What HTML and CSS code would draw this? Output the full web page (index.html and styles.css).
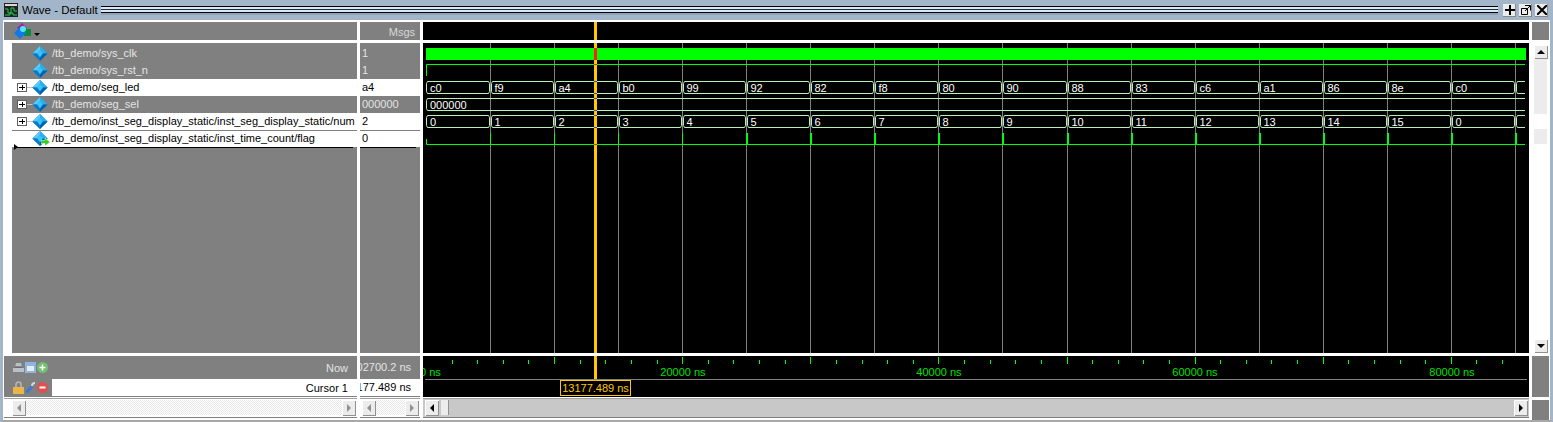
FILE: index.html

```html
<!DOCTYPE html>
<html lang="en">
<head>
  <meta charset="UTF-8">
  <meta name="viewport" content="width=device-width, initial-scale=1.0">
  <title>Wave - Default</title>
  <link rel="stylesheet" href="styles.css">
</head>
<body>
  <svg class="defs" width="0" height="0">
    <symbol id="diamond" viewBox="0 0 18 18">
      <polygon points="9,1 17,9 9,17 1,9" fill="#0a8fe0"/>
      <polygon points="9,1 1,9 6,9 9,5" fill="#5fc8f5"/>
      <polygon points="9,1 17,9 12,9 9,5" fill="#2ab0f0"/>
      <polygon points="1,9 9,17 9,13 6,9" fill="#0b78c8"/>
      <polygon points="17,9 9,17 9,13 12,9" fill="#0560a8"/>
      <polygon points="9,5 12,9 9,13 6,9" fill="#35c8fa"/>
    </symbol>
  </svg>

  <div class="window">
    <div class="titlebar">
      <svg class="title-icon" width="14" height="14" viewBox="0 0 14 14">
        <rect width="14" height="14" fill="#222"/>
        <rect x="1" y="1" width="12" height="2" fill="#d8d8d8"/>
        <path d="M1 6h3v4h3V5h3v3h3M1 12h5v-2h3v2h4" fill="none" stroke="#1fd050"/>
      </svg>
      <span class="title-text">Wave - Default</span>
      <div class="grip"></div>
      <div class="title-btns">
        <button class="title-btn">
          <svg width="10" height="10" viewBox="0 0 10 10"><path d="M5 0v10M0 5h10" stroke="#000" stroke-width="2"/></svg>
        </button>
        <button class="title-btn">
          <svg width="10" height="10" viewBox="0 0 10 10"><path d="M.5 3.5h6v6h-6zM4 .5h5.500v5M9 1 4 6" fill="none" stroke="#000"/></svg>
        </button>
        <button class="title-btn">
          <svg width="10" height="10" viewBox="0 0 10 10"><path d="M0 0l10 10M10 0 0 10" stroke="#000" stroke-width="2"/></svg>
        </button>
      </div>
    </div>

    <div class="panes">
      <!-- header row -->
      <div class="head head-names">
        <svg width="17" height="17" viewBox="0 0 17 17">
          <polygon points="3,5 8,0 13,5 8,10" fill="#a020c0"/>
          <rect x="10" y="6" width="7" height="7" fill="#0d8a3a"/>
          <polygon points="0,10 6,4 12,10 6,16" fill="#1078e8"/>
          <circle cx="9" cy="6" r="3" fill="#50e8f0"/>
        </svg>
        <span class="drop"></span>
      </div>
      <div class="head head-msgs">Msgs</div>
      <div class="head-wave"><span class="cursor-stub"></span></div>
      <div class="head head-side"></div>

      <!-- signal rows -->
      <div class="names">
        <div class="row">
          <svg class="sig"><use href="#diamond"/></svg>
          <span>/tb_demo/sys_clk</span>
        </div>
        <div class="row">
          <svg class="sig"><use href="#diamond"/></svg>
          <span>/tb_demo/sys_rst_n</span>
        </div>
        <div class="row sel">
          <i class="plus"></i>
          <svg class="sig"><use href="#diamond"/></svg>
          <span>/tb_demo/seg_led</span>
        </div>
        <div class="row">
          <i class="plus"></i>
          <svg class="sig"><use href="#diamond"/></svg>
          <span>/tb_demo/seg_sel</span>
        </div>
        <div class="row sel">
          <i class="plus"></i>
          <svg class="sig"><use href="#diamond"/></svg>
          <span>/tb_demo/inst_seg_display_static/inst_seg_display_static/num</span>
        </div>
        <div class="row sel last">
          <svg class="sig"><use href="#diamond"/></svg>
          <svg class="out" width="9" height="8" viewBox="0 0 9 8"><path d="M0 2.500h4V0l5 4-5 4V5.500H0z" fill="#30d020" stroke="#fff" stroke-width=".5"/></svg>
          <span>/tb_demo/inst_seg_display_static/inst_time_count/flag</span>
        </div>
        <span class="insert-mark"></span>
      </div>

      <div class="values">
        <div class="row">1</div>
        <div class="row">1</div>
        <div class="row sel">a4</div>
        <div class="row">000000</div>
        <div class="row sel">2</div>
        <div class="row sel last">0</div>
      </div>

      <div class="wave">
        <svg id="waveSvg" width="1106" height="310" viewBox="423 43 1106 310"></svg>
      </div>

      <div class="vscroll">
        <button class="sb-btn up"></button>
        <div class="vtrack"></div>
        <button class="sb-btn down"></button>
      </div>

      <!-- now / cursor -->
      <div class="foot-names">
        <div class="now">
          <div class="tools">
            <svg width="11" height="11" viewBox="0 0 11 11"><path d="M3 1h5l1 4H2zM0 6h11v4H0z" fill="#b8c0c8"/><path d="M2 5h7" stroke="#555"/></svg>
            <svg width="11" height="11" viewBox="0 0 11 11"><rect width="11" height="11" fill="#8fb4e0"/><rect x="2" y="4" width="7" height="5" fill="#e4ecf4"/></svg>
            <svg width="11" height="11" viewBox="0 0 11 11"><circle cx="5.500" cy="5.500" r="5.500" fill="#70c070"/><path d="M5.500 2.500v6M2.500 5.500h6" stroke="#fff" stroke-width="1.500"/></svg>
          </div>
          <span>Now</span>
        </div>
        <div class="cur">
          <div class="tools">
            <svg width="11" height="13" viewBox="0 0 11 13"><path d="M3 6V3.500a2.500 2.500 0 0 1 5 0V6" fill="none" stroke="#b8b8b8" stroke-width="1.500"/><rect y="6" width="11" height="7" fill="#eab64a"/></svg>
            <svg width="11" height="12" viewBox="0 0 11 12"><path d="M1.500 10.500 7 4.500" stroke="#3a78d8" stroke-width="3"/><path d="M7 4a3 3 0 0 1 3-3" fill="none" stroke="#d0d8e0" stroke-width="2"/></svg>
            <svg width="11" height="11" viewBox="0 0 11 11"><circle cx="5.500" cy="5.500" r="5.500" fill="#e05050"/><path d="M2.500 5.500h6" stroke="#fff" stroke-width="2"/></svg>
          </div>
          <span>Cursor 1</span>
        </div>
      </div>
      <div class="foot-values">
        <div class="now">02700.2 ns</div>
        <div class="cur">177.489 ns</div>
      </div>
      <div class="ruler">
        <svg id="rulerSvg" width="1106" height="41" viewBox="423 356 1106 41"></svg>
      </div>
      <div class="foot-side"></div>

      <!-- horizontal scrollbars -->
      <div class="hscroll pale">
        <button class="sb-btn left"></button>
        <div class="htrack"></div>
        <button class="sb-btn right"></button>
      </div>
      <div class="hscroll pale narrow">
        <button class="sb-btn left"></button>
        <div class="htrack"></div>
        <button class="sb-btn right"></button>
      </div>
      <div class="hscroll dark">
        <button class="sb-btn left"></button>
        <span class="thumb"></span>
        <div class="htrack"></div>
        <button class="sb-btn right"></button>
      </div>
      <div class="foot-side"></div>
    </div>
  </div>

  <script src="wave.js"></script>
</body>
</html>
```

FILE: styles.css

```css
html, body { margin: 0; padding: 0; height: 100%; overflow: hidden; background: #fff; }
body { font-family: "Liberation Sans", Arial, sans-serif; font-size: 11px; color: #000; }
button { padding: 0; border: none; }
.defs { position: absolute; }

.window { width: 1553px; height: 422px; box-sizing: border-box; border-left: 3px solid #a3b6c9; border-right: 3px solid #a3b6c9; border-bottom: 2px solid #a8a8a8; }

.titlebar { display: flex; align-items: center; height: 20px; background: #a3b6c9; margin: 0 -3px; padding: 0 5px 0 4px; box-sizing: border-box; }
.title-icon { flex: none; }
.title-text { margin-left: 4px; width: 79px; font-size: 11.5px; color: #000; white-space: nowrap; }
.grip {
  flex: 1; height: 9px;
  background: linear-gradient(#000 0 1px, #d8e8f4 1px 3px, #20303c 3px 4px, #d8e8f4 4px 6px, #000 6px 7px, #8ea4b8 7px 9px);
}
.title-btns { display: flex; gap: 3px; margin-left: 5px; }
.title-btn { display: flex; align-items: center; justify-content: center; width: 13px; height: 13px; background: #ececec; box-shadow: inset -1px -1px 0 #888; }

.panes {
  display: grid;
  grid-template-columns: 353px 60px 1106px 17px;
  grid-template-rows: 18px 310px 41px 20px;
  column-gap: 3px; row-gap: 3px;
  padding: 2px 0 0 1px;
}

.head { background: #808080; color: #d8d8d8; }
.head-names { display: flex; align-items: center; padding-left: 10px; }
.head-names .drop { margin: 7px 0 0 3px; border: 3px solid transparent; border-top-color: #000; border-bottom: 0; }
.head-msgs { text-align: right; padding-right: 5px; line-height: 21px; }
.head-wave { position: relative; background: #000; }
.cursor-stub { position: absolute; left: 171px; top: 0; width: 3px; height: 18px; background: #ffc800; }

.names, .values { background: #808080; padding-top: 2px; }
.names { position: relative; border-left: 8px solid #fff; }
.row { display: flex; align-items: center; height: 17px; padding-bottom: 2px; color: #e4e4e4; white-space: nowrap; position: relative; box-sizing: border-box; }
.names .row { padding-left: 40px; }
.values .row { padding-left: 2px; }
.row.sel { background: #fff; color: #000; }
.row.last { border-top: 1px solid #808080; height: 17px; }
.row.last::after { content: ""; position: absolute; bottom: -1px; height: 1px; background: #000; }
.names .row.last::after { left: 2px; right: 4px; }
.values .row.last::after { left: 0; right: 4px; }
.sig { position: absolute; left: 19px; top: 0; width: 18px; height: 17px; }
.last .sig { top: -1px; }
.out { position: absolute; left: 29px; top: 7px; }
.plus { position: absolute; left: 5px; top: 4px; width: 10px; height: 9px; box-sizing: border-box; background: linear-gradient(#000, #000) center / 6px 1px no-repeat, linear-gradient(#000, #000) center / 1px 5px no-repeat, #fff; border: 1px solid #606060; }
.plus::after { content: ""; position: absolute; left: 9px; top: 3px; width: 6px; height: 1px; background: #c0c0c0; }
.insert-mark { position: absolute; left: 2px; top: 101px; border: 3px solid transparent; border-left: 4px solid #000; border-right: 0; }

.wave, .ruler { background: #000; line-height: 0; }
.wave text, .ruler text { font-size: 11px; }
.bus-label { fill: #fff; }
.ruler-label { fill: #00e000; }
.cursor-label { fill: #ffc800; }

.vscroll { display: flex; flex-direction: column; align-items: center; background: #fff; padding-top: 2px; }
.vtrack { flex: 1; width: 13px; background: linear-gradient(#ececec 0 55px, #fff 55px 70px, #ececec 70px 85px, #fff 85px); }
.foot-names, .foot-values { display: flex; flex-direction: column; background: #808080; }
.foot-names .now, .foot-names .cur { display: flex; align-items: center; justify-content: space-between; padding: 0 9px 0 9px; }
.now { height: 23px; color: #e4e4e4; box-sizing: border-box; }
.cur { height: 17px; background: #fff; }
.foot-names .cur { background: linear-gradient(90deg, #808080 48px, #fff 48px); }
.foot-names .cur span { color: #000; }
.tools { display: flex; align-items: center; gap: 1px; }
.foot-values { overflow: hidden; }
.foot-values .now, .foot-values .cur { display: flex; justify-content: flex-end; padding-right: 9px; line-height: 23px; white-space: nowrap; }
.foot-values .cur { line-height: 17px; }
.foot-side { background: #808080; }

.hscroll { display: flex; align-items: stretch; padding: 1px 1px 2px 1px; border-top: 1px solid #a0a0a0; border-bottom: 1px solid #808080; margin-top: -2px; height: 20px; box-sizing: border-box; background: #fff; }
.hscroll.pale { padding-left: 8px; }
.hscroll.narrow { padding-left: 2px; }
.hscroll.pale .htrack { flex: 1; background: repeating-conic-gradient(#fff 0 25%, #e8e8e8 0 50%) 0 0 / 2px 2px; }
.hscroll.dark { padding-left: 2px; background: #c8c8c8; }
.hscroll.dark .htrack { flex: 1; background: #c8c8c8; }
.thumb { width: 8px; margin-left: 2px; background: #ececec; box-shadow: inset -1px 0 0 #909090; }

.sb-btn { position: relative; flex: none; width: 14px; height: 14px; background: #ececec; box-shadow: inset 1px 1px 0 #fff, inset -1px -1px 0 #909090; }
.hscroll .sb-btn { height: 16px; }
.sb-btn::before { content: ""; position: absolute; left: 50%; top: 50%; border: 4px solid transparent; }
.up::before { border-bottom-color: #000; border-top: 0; margin: -2px 0 0 -4px; }
.down::before { border-top-color: #000; border-bottom: 0; margin: -2px 0 0 -4px; }
.left::before { border-right-color: #000; border-left: 0; margin: -4px 0 0 -2px; }
.right::before { border-left-color: #000; border-right: 0; margin: -4px 0 0 -2px; }
.pale .left::before { border-right-color: #909090; }
.pale .right::before { border-left-color: #909090; }
```

FILE: wave.js

```js
const GREEN = '#00ff00';
const BUS = '#b8f0b8';
const GRID = '#808080';
const CURSOR = '#ffc800';

const START = 426;
const END = 1526;
const FIRST = 490;
const STEP = 64.06;
const CUR_X = 594;

const ledValues = ['c0','f9','a4','b0','99','92','82','f8','80','90','88','83','c6','a1','86','8e','c0',''];
const numValues = ['0','1','2','3','4','5','6','7','8','9','10','11','12','13','14','15','0',''];

function edge(k) {
  if (k < 0) return START;
  return Math.min(Math.round(FIRST + STEP * k) + 0.5, END);
}

function busPath(a, b, top, bot, open) {
  if (open) return `M${a} ${top + 2}L${a + 1} ${top}H${b}M${a} ${bot - 2}L${a + 1} ${bot}H${b}M${a} ${top + 2}V${bot - 2}`;
  return `M${a + 1} ${top}H${b - 1}L${b} ${top + 2}V${bot - 2}L${b - 1} ${bot}H${a + 1}L${a} ${bot - 2}V${top + 2}Z`;
}

function busRow(values, top, bot) {
  let out = '';
  values.forEach((val, i) => {
    const a = edge(i - 1);
    const b = edge(i);
    const last = i === values.length - 1;
    if (a >= END) return;
    out += `<path d="${busPath(a + (i ? 1 : 0.5), last ? END - 1 : b - 1, top, bot, last)}" fill="none" stroke="${BUS}"/>`;
    if (val) out += `<text class="bus-label" x="${a + 4}" y="${bot - 2}">${val}</text>`;
  });
  return out;
}

function renderWave() {
  let s = '';
  for (let k = 0; k < 17; k++) {
    const x = edge(k);
    s += `<path d="M${x} 43V353" stroke="${GRID}"/>`;
  }
  s += `<rect x="${START}" y="48" width="${END - START}" height="12" fill="${GREEN}"/>`;
  s += `<path d="M426.5 76V64.500H1525" fill="none" stroke="${GREEN}"/>`;
  s += busRow(ledValues, 81.5, 93.5);
  s += `<path d="${busPath(426.5, 1525, 98.5, 110.5, true)}" fill="none" stroke="${BUS}"/>`;
  s += `<text class="bus-label" x="430" y="108.500">000000</text>`;
  s += busRow(numValues, 115.5, 127.5);

  // flag pulses once per count, they get thicker further along
  s += `<path d="M426.5 139V144.500H1525" fill="none" stroke="${GREEN}"/>`;
  for (let k = 0; k < 17; k++) {
    const x = edge(k) - 0.5;
    s += `<rect x="${x}" y="133" width="${k > 3 ? 2 : 1}" height="11" fill="${GREEN}"/>`;
  }

  s += `<rect x="${CUR_X}" y="43" width="3" height="310" fill="${CURSOR}"/>`;
  s += `<rect x="${CUR_X}" y="48" width="3" height="12" fill="#ff2000"/>`;
  [64, 144].forEach(y => { s += `<rect x="${CUR_X}" y="${y}" width="3" height="1" fill="#ff2000"/>`; });
  [81, 93, 98, 110, 115, 127].forEach(y => { s += `<rect x="${CUR_X}" y="${y}" width="3" height="1" fill="#4040c0"/>`; });
  document.getElementById('waveSvg').innerHTML = s;
}

function renderRuler() {
  let s = '';
  for (let i = 1; i < 43; i++) {
    const x = Math.round(426 + 25.62 * i) + 0.5;
    const major = i % 5 === 0;
    s += `<path d="M${x} ${major ? 357 : 360}V364" stroke="${GREEN}"/>`;
  }
  [[683, '20000 ns'], [939, '40000 ns'], [1195, '60000 ns'], [1452, '80000 ns']].forEach(([x, label]) => {
    s += `<text class="ruler-label" x="${x}" y="376" text-anchor="middle">${label}</text>`;
  });
  s += `<text class="ruler-label" x="420" y="376">0 ns</text>`;
  s += `<path d="M425 379.500H1527" stroke="${GRID}"/>`;
  s += `<rect x="${CUR_X}" y="356" width="3" height="23" fill="${CURSOR}"/>`;
  s += `<rect x="560.5" y="380.500" width="70" height="15" fill="#000" stroke="${CURSOR}"/>`;
  s += `<text class="cursor-label" x="595.5" y="392" text-anchor="middle">13177.489 ns</text>`;
  document.getElementById('rulerSvg').innerHTML = s;
}

renderWave();
renderRuler();
```
